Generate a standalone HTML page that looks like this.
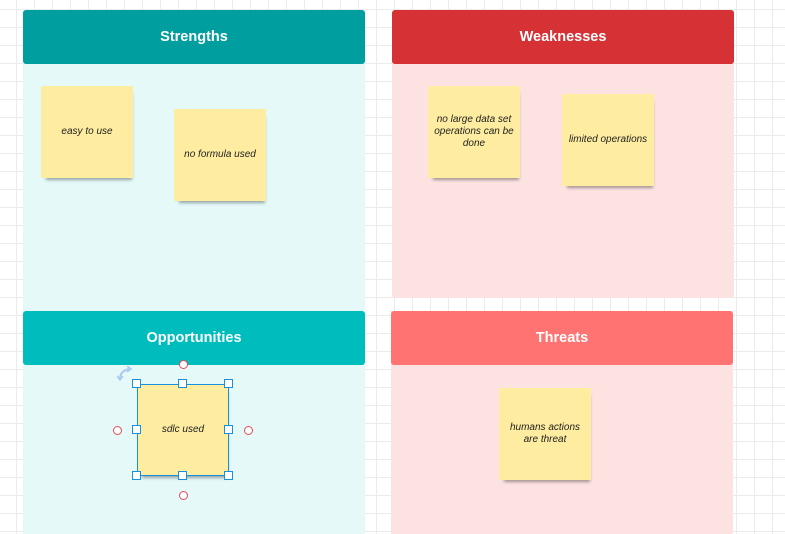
<!DOCTYPE html>
<html><head><style>
body{margin:0;width:785px;height:534px;overflow:hidden;position:relative;font-family:"Liberation Sans",sans-serif;
background-color:#fff;background-image:linear-gradient(#ebebeb 1px,transparent 1px),linear-gradient(90deg,#ebebeb 1px,transparent 1px);background-size:18px 18px;background-position:-2px 9px}
.b{position:absolute}
.h{position:absolute;color:#fff;font-weight:bold;font-size:14.5px;display:flex;align-items:center;justify-content:center;border-radius:3px}
.n{position:absolute;width:92px;height:92px;padding:0 5px;box-sizing:border-box;background:#feeda0;box-shadow:2px 5px 3px -3px rgba(0,0,0,.35);display:flex;align-items:center;justify-content:center;text-align:center;font-style:italic;font-size:10px;line-height:12px;color:#222}
.s{position:absolute;width:9px;height:9px;border:1px solid #1a8fdc;background:#fff;box-sizing:border-box}
.c{position:absolute;width:9px;height:9px;border:1px solid #e64a5a;border-radius:50%;background:#fff;box-sizing:border-box}
</style></head><body>
<div class="b" style="left:23px;top:10px;width:342px;height:524px;background:#e5f9f9"></div>
<div class="b" style="left:392px;top:10px;width:342px;height:288px;background:#fde2e2;border-radius:3px"></div>
<div class="b" style="left:391px;top:311px;width:342px;height:223px;background:#fde2e2"></div>
<div class="h" style="left:23px;top:10px;width:342px;height:54px;background:#009e9e">Strengths</div>
<div class="h" style="left:392px;top:10px;width:342px;height:54px;background:#d63135">Weaknesses</div>
<div class="h" style="left:23px;top:311px;width:342px;height:54px;background:#00bdbd">Opportunities</div>
<div class="h" style="left:391px;top:311px;width:342px;height:54px;background:#ff7373">Threats</div>
<div class="n" style="left:41px;top:86px">easy to use</div>
<div class="n" style="left:174px;top:109px">no formula used</div>
<div class="n" style="left:428px;top:86px">no large data set operations can be done</div>
<div class="n" style="left:562px;top:94px">limited operations</div>
<div class="n" style="left:137px;top:384px;border:1px solid #1a8fdc">sdlc used</div>
<div class="n" style="left:499px;top:388px;padding:0 8px">humans actions are threat</div>
<div class="s" style="left:132px;top:379px"></div><div class="s" style="left:178px;top:379px"></div><div class="s" style="left:224px;top:379px"></div>
<div class="s" style="left:132px;top:425px"></div><div class="s" style="left:224px;top:425px"></div>
<div class="s" style="left:132px;top:471px"></div><div class="s" style="left:178px;top:471px"></div><div class="s" style="left:224px;top:471px"></div>
<div class="c" style="left:179px;top:360px"></div><div class="c" style="left:179px;top:491px"></div>
<div class="c" style="left:113px;top:426px"></div><div class="c" style="left:244px;top:426px"></div>
<svg class="b" style="left:117px;top:366px" width="18" height="16"><path d="M3 13 Q3 5 12 3" stroke="#a9c8f0" stroke-width="2" fill="none"/><path d="M10 0 L14 3 L10 6 M0 10 L3 14 L6 10" stroke="#a9c8f0" stroke-width="1.5" fill="none"/></svg>
</body></html>
